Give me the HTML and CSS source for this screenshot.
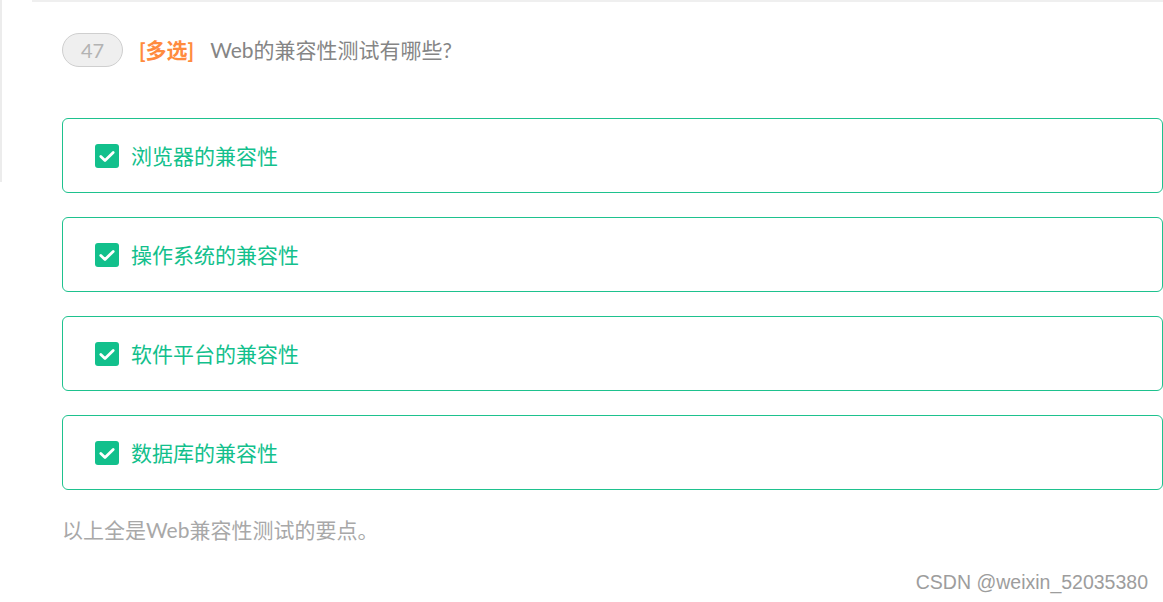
FILE: index.html
```html
<!DOCTYPE html>
<html lang="zh">
<head>
<meta charset="utf-8">
<link rel="stylesheet" href="styles.css">
</head>
<body>
<div class="page">
  <div class="leftbar"></div>
  <div class="card">
    <div class="question">
      <span class="num">47</span>
      <span class="type">[多选]</span>
      <span class="title">Web的兼容性测试有哪些?</span>
    </div>
    <div class="options">
      <div class="option"><span class="check"><svg viewBox="0 0 24 24" width="24" height="24"><path d="M5.8 12.4l4.2 4 8.2-8" fill="none" stroke="#fff" stroke-width="2.8" stroke-linecap="round" stroke-linejoin="round"/></svg></span><span class="label">浏览器的兼容性</span></div>
      <div class="option"><span class="check"><svg viewBox="0 0 24 24" width="24" height="24"><path d="M5.8 12.4l4.2 4 8.2-8" fill="none" stroke="#fff" stroke-width="2.8" stroke-linecap="round" stroke-linejoin="round"/></svg></span><span class="label">操作系统的兼容性</span></div>
      <div class="option"><span class="check"><svg viewBox="0 0 24 24" width="24" height="24"><path d="M5.8 12.4l4.2 4 8.2-8" fill="none" stroke="#fff" stroke-width="2.8" stroke-linecap="round" stroke-linejoin="round"/></svg></span><span class="label">软件平台的兼容性</span></div>
      <div class="option"><span class="check"><svg viewBox="0 0 24 24" width="24" height="24"><path d="M5.8 12.4l4.2 4 8.2-8" fill="none" stroke="#fff" stroke-width="2.8" stroke-linecap="round" stroke-linejoin="round"/></svg></span><span class="label">数据库的兼容性</span></div>
    </div>
    <p class="explain">以上全是Web兼容性测试的要点。</p>
  </div>
  <div class="watermark">CSDN @weixin_52035380</div>
</div>
</body>
</html>
```
FILE: styles.css
```css
html, body {
  margin: 0;
  padding: 0;
  background: #fff;
}
body {
  width: 1163px;
  height: 602px;
  overflow: hidden;
  font-family: Lato, "Noto Sans CJK SC", sans-serif;
}
.page {
  position: relative;
  height: 602px;
}
.leftbar {
  position: absolute;
  left: 0;
  top: 0;
  width: 2px;
  height: 182px;
  background: #ececec;
}
.card {
  margin-left: 32px;
  border-top: 2px solid #efefef;
  padding: 31px 0 0 30px;
}
.question {
  display: flex;
  align-items: center;
  height: 34px;
}
.num {
  box-sizing: border-box;
  width: 61px;
  height: 34px;
  border: 1px solid #cfcfcf;
  border-radius: 17px;
  background: #efefef;
  color: #b3b3b3;
  font-size: 20px;
  display: flex;
  align-items: center;
  justify-content: center;
}
.type {
  margin-left: 16px;
  margin-bottom: 3px;
  color: #ff8b3e;
  font-weight: bold;
  font-size: 21px;
}
.title {
  margin-left: 16px;
  margin-bottom: 3px;
  color: #858585;
  font-size: 21px;
}
.options {
  margin-top: 51px;
  display: flex;
  flex-direction: column;
  gap: 24px;
}
.option {
  box-sizing: border-box;
  width: 1101px;
  height: 75px;
  border: 1px solid #1ec28e;
  border-radius: 6px;
  display: flex;
  align-items: center;
  padding-left: 32px;
}
.check {
  width: 24px;
  height: 24px;
  border-radius: 3px;
  background: #12c08c;
  display: flex;
}
.label {
  margin-left: 12px;
  margin-bottom: 2px;
  color: #12c08c;
  font-size: 21px;
}
.explain {
  margin: 26px 0 0;
  color: #a8a8a8;
  font-size: 21px;
  line-height: 28px;
}
.watermark {
  position: absolute;
  right: 15px;
  top: 571px;
  color: #9d9d9d;
  font-family: "Liberation Sans", sans-serif;
  font-size: 19.5px;
}
```
